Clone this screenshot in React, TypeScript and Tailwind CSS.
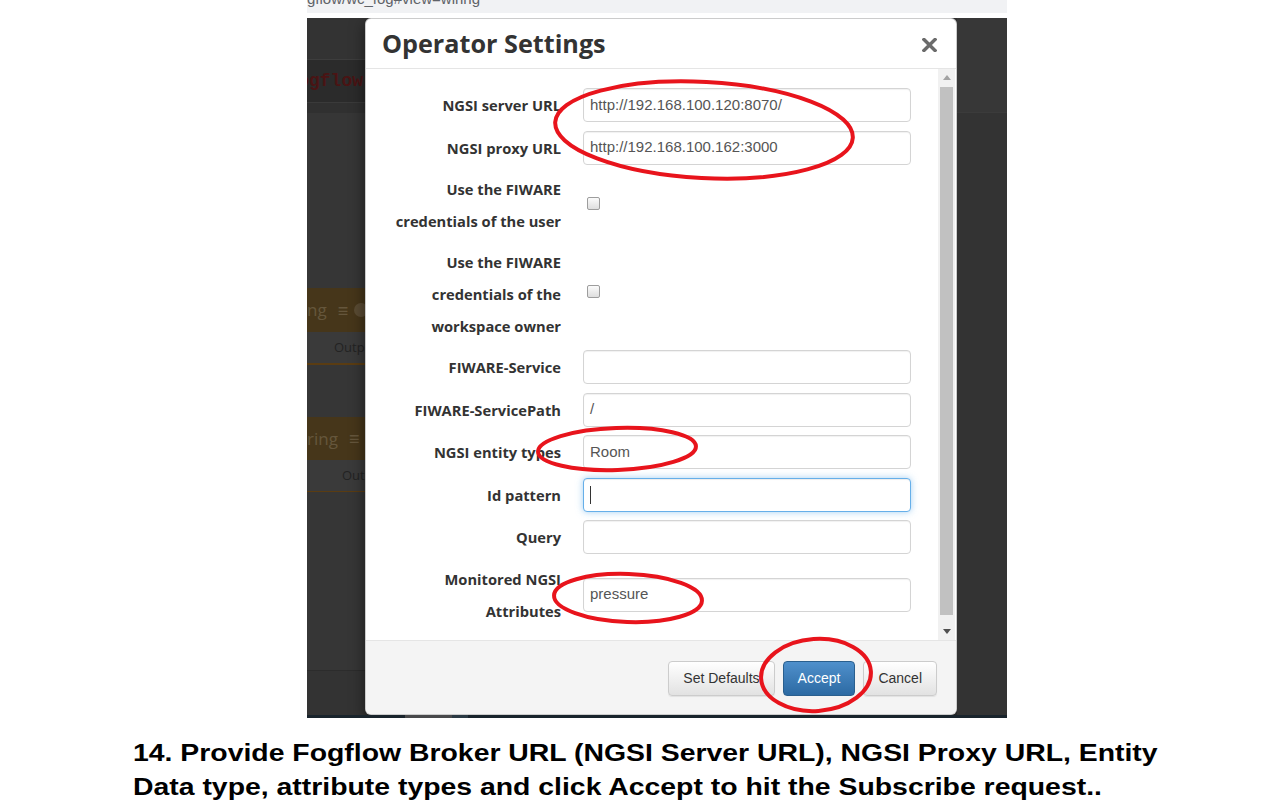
import React from "react";

const labelCls =
  "w-[181px] shrink-0 text-right font-['Open_Sans',sans-serif] font-bold text-[14.7px] text-[#333333]";

function Field({ value, focused }: { value?: string; focused?: boolean }) {
  return (
    <div
      className={
        "h-[34px] w-[328px] rounded-[4px] bg-white flex items-center px-[6px] font-['Liberation_Sans',Arial,sans-serif] text-[15px] text-[#555555] " +
        (focused
          ? "border border-[#66afe9] shadow-[0_0_7px_rgba(102,175,233,0.6),inset_0_1px_1px_rgba(0,0,0,0.075)]"
          : "border border-[#d4d4d4] shadow-[inset_0_1px_1px_rgba(0,0,0,0.06)]")
      }
    >
      {focused ? <span className="block w-px h-[18px] bg-[#333]" /> : value}
    </div>
  );
}

function InputRow({ label, value, focused }: { label: string; value?: string; focused?: boolean }) {
  return (
    <div className="flex items-center h-[34px]">
      <div className={labelCls + " leading-[20px]"}>{label}</div>
      <div className="ml-[22px]">
        <Field value={value} focused={focused} />
      </div>
    </div>
  );
}

function Checkbox() {
  return (
    <div className="ml-[26px] mb-[4px] w-[13px] h-[13px] rounded-[2px] border border-[#9d9d9d] bg-gradient-to-b from-[#fbfbfb] to-[#dedede]" />
  );
}

function LeftStrip() {
  return (
    <div className="w-[58px] shrink-0 flex flex-col overflow-hidden">
      <div className="h-[41px] bg-[#333333]" />
      <div className="h-px bg-[#3d3d3d]" />
      <div className="h-[42px] bg-[#2b2b2b] flex items-center justify-end overflow-hidden pr-[2px]">
        <span className="whitespace-nowrap font-['Liberation_Mono',monospace] font-bold text-[18px] text-[#4a1414]">Fogflow</span>
      </div>
      <div className="h-px bg-[#3a3a3a]" />
      <div className="h-[10px] bg-[#303030]" />
      <div className="h-[175px] bg-[#363636]" />
      <div className="h-[44px] bg-[#46361a] flex items-center whitespace-nowrap font-['Open_Sans',sans-serif] text-[17px] text-[#65563c]">
        <span>ng</span>
        <span className="ml-[11px] text-[18px]">≡</span>
        <span className="ml-[6px] w-[14px] h-[14px] rounded-full bg-[#5a4b33] shrink-0" />
      </div>
      <div className="h-[31px] bg-[#3a3a3a] flex items-center pl-[27px] whitespace-nowrap font-['Open_Sans',sans-serif] text-[13px] text-[#232323]">
        Output
      </div>
      <div className="h-[2px] bg-[#5a3c12]" />
      <div className="h-[52px] bg-[#363636]" />
      <div className="h-[43px] bg-[#46361a] flex items-center whitespace-nowrap font-['Open_Sans',sans-serif] text-[17px] text-[#65563c]">
        <span>ring</span>
        <span className="ml-[11px] text-[18px]">≡</span>
        <span className="ml-[6px] w-[14px] h-[14px] rounded-full bg-[#5a4b33] shrink-0" />
      </div>
      <div className="h-[31px] bg-[#3a3a3a] flex items-center pl-[35px] whitespace-nowrap font-['Open_Sans',sans-serif] text-[13px] text-[#232323]">
        Output
      </div>
      <div className="h-px bg-[#5a3c12]" />
      <div className="h-[178px] bg-[#363636]" />
      <div className="h-px bg-[#2c2c2c]" />
      <div className="h-[44px] bg-[#333333]" />
    </div>
  );
}

function RightStrip() {
  return (
    <div className="w-[50px] shrink-0 flex flex-col">
      <div className="h-[94px] bg-[#373737]" />
      <div className="h-px bg-[#3b3b3b]" />
      <div className="flex-1 bg-[#333333]" />
    </div>
  );
}

function Scrollbar() {
  return (
    <div className="w-[17px] mr-px shrink-0 bg-[#f1f1f1] flex flex-col items-center">
      <div className="h-[17px] flex items-center justify-center">
        <svg width="8" height="5" viewBox="0 0 8 5">
          <path d="M0 5 L4 0 L8 5 Z" fill="#a3a3a3" />
        </svg>
      </div>
      <div className="flex-1 w-full flex flex-col items-center pt-px">
        <div className="w-[13px] h-[528px] bg-[#c1c1c1]" />
      </div>
      <div className="h-[17px] flex items-center justify-center">
        <svg width="8" height="5" viewBox="0 0 8 5">
          <path d="M0 0 L8 0 L4 5 Z" fill="#505050" />
        </svg>
      </div>
    </div>
  );
}

function Modal() {
  const btnBase =
    "h-[35px] px-[14px] rounded-[4px] flex items-center font-['Liberation_Sans',Arial,sans-serif] text-[14px]";
  return (
    <div className="w-[592px] shrink-0 h-full bg-white rounded-[6px] overflow-hidden flex flex-col shadow-[0_5px_15px_rgba(0,0,0,0.5)] border border-[rgba(0,0,0,0.2)]">
      <div className="h-[50px] shrink-0 border-b border-[#e5e5e5] flex items-center justify-between pl-[16px] pr-[19px]">
        <div className="font-['Open_Sans',sans-serif] font-bold text-[25.2px] leading-none text-[#333333]">
          Operator Settings
        </div>
        <svg width="15" height="14" viewBox="0 0 15 14" className="mt-[2px]">
          <path d="M2 1.5 L13 12.5 M13 1.5 L2 12.5" stroke="#6b6b6b" strokeWidth="3.4" strokeLinecap="square" />
        </svg>
      </div>
      <div className="flex-1 flex min-h-0">
        <div className="flex-1 pt-[19px] pl-[14px] flex flex-col gap-[8.5px]">
          <InputRow label="NGSI server URL" value="http://192.168.100.120:8070/" />
          <InputRow label="NGSI proxy URL" value="http://192.168.100.162:3000" />
          <div className="flex items-center">
            <div className={labelCls + " leading-[32px]"}>
              Use the FIWARE
              <br />
              credentials of the user
            </div>
            <Checkbox />
          </div>
          <div className="flex items-center">
            <div className={labelCls + " leading-[32px]"}>
              Use the FIWARE
              <br />
              credentials of the
              <br />
              workspace owner
            </div>
            <Checkbox />
          </div>
          <InputRow label="FIWARE-Service" value="" />
          <InputRow label="FIWARE-ServicePath" value="/" />
          <InputRow label="NGSI entity types" value="Room" />
          <InputRow label="Id pattern" focused />
          <InputRow label="Query" value="" />
          <div className="flex items-center">
            <div className={labelCls + " leading-[32px]"}>
              Monitored NGSI
              <br />
              Attributes
            </div>
            <div className="ml-[22px]">
              <Field value="pressure" />
            </div>
          </div>
        </div>
        <Scrollbar />
      </div>
      <div className="h-[74px] shrink-0 border-t border-[#e5e5e5] bg-[#f4f4f4] flex justify-end items-start pt-[20px] pr-[19px] gap-[8px]">
        <div className={btnBase + " border border-[#cccccc] bg-gradient-to-b from-white to-[#e2e2e2] text-[#333333] shadow-[0_1px_1px_rgba(0,0,0,0.075)]"}>
          Set Defaults
        </div>
        <div className={btnBase + " border border-[#2a5f8e] bg-gradient-to-b from-[#4f90cc] to-[#2c6aa3] text-white"}>
          Accept
        </div>
        <div className={btnBase + " border border-[#cccccc] bg-gradient-to-b from-white to-[#e2e2e2] text-[#333333] shadow-[0_1px_1px_rgba(0,0,0,0.075)]"}>
          Cancel
        </div>
      </div>
    </div>
  );
}

export default function App() {
  return (
    <div className="relative w-[1280px] h-[812px] bg-white overflow-hidden">
      <div className="ml-[307px] w-[700px] flex flex-col">
        <div className="h-[13px] bg-[#f1f2f4] overflow-hidden">
          <div className="mt-[-9px] leading-[15px] whitespace-nowrap font-['Liberation_Sans',Arial,sans-serif] text-[15px] text-[#5f6368]">
            gflow/wc_fog#view=wiring
          </div>
        </div>
        <div className="h-[5px] bg-white" />
        <div className="flex h-[697px] bg-[#333333] overflow-hidden">
          <LeftStrip />
          <Modal />
          <RightStrip />
        </div>
        <div className="h-[3px] bg-[#19242c] flex">
          <div className="w-[98px]" />
          <div className="w-[47px] bg-[#48494b]" />
          <div className="w-[16px] bg-[#2b3a44]" />
        </div>
      </div>
      <div className="ml-[133px] mt-[18px] origin-left scale-x-[1.234] font-['Liberation_Sans',Arial,sans-serif] font-bold text-[23px] leading-[34px] text-black whitespace-nowrap">
        <div>14. Provide Fogflow Broker URL (NGSI Server URL), NGSI Proxy URL, Entity</div>
        <div>Data type, attribute types and click Accept to hit the Subscribe request..</div>
      </div>
      <svg className="absolute inset-0 pointer-events-none" width="1280" height="812" viewBox="0 0 1280 812">
        <g fill="none" stroke="#e8141c" strokeWidth="4">
          <ellipse cx="704" cy="130" rx="149" ry="48" transform="rotate(3 704 130)" />
          <ellipse cx="617" cy="449" rx="79" ry="21" transform="rotate(-2 617 449)" />
          <ellipse cx="628" cy="598" rx="74" ry="24" transform="rotate(2 628 598)" />
          <ellipse cx="816" cy="675" rx="55" ry="36" transform="rotate(-4 816 675)" />
        </g>
      </svg>
    </div>
  );
}
